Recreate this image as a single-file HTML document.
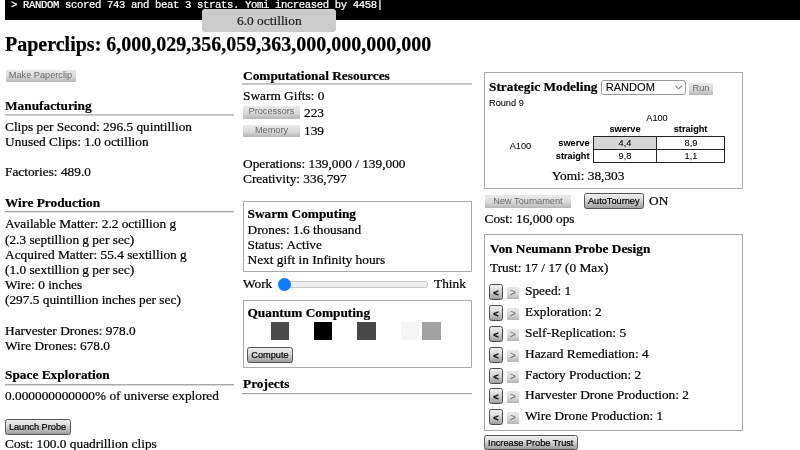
<!DOCTYPE html>
<html><head><meta charset="utf-8"><title>Universal Paperclips</title>
<style>
html,body{margin:0;padding:0;background:#fff;}
body{width:800px;height:450px;overflow:hidden;position:relative;font-family:"Liberation Serif",serif;font-size:13.33px;color:#000;}
#w{position:absolute;left:0;top:0;width:800px;height:450px;will-change:transform;}
.t{position:absolute;white-space:nowrap;line-height:0;height:20px;-webkit-text-stroke:0.22px currentColor;}
.t::before{content:"";display:inline-block;height:20px;width:0;}
.b{font-weight:bold;}
.s{font-family:"Liberation Sans",sans-serif;-webkit-text-stroke:0.08px currentColor;}
.m{font-family:"Liberation Mono",monospace;}
.r{position:absolute;}
.box{position:absolute;border:1px solid #a9a9a9;box-sizing:border-box;}
.btn{position:absolute;background-origin:border-box;font-family:"Liberation Sans",sans-serif;box-sizing:border-box;border:1.3px solid #555;border-radius:2.5px;-webkit-text-stroke:0.2px #000;background:linear-gradient(#efefef,#dadada 40%,#9e9e9e);color:#000;text-align:center;white-space:nowrap;overflow:hidden;}
.dis{border:1px solid transparent;-webkit-text-stroke:0;background:linear-gradient(#eaeaea,#d9d9d9 55%,#b6b6b6);background-origin:border-box;color:#686868;border-radius:1px;}
</style></head><body><div id="w">
<div class="r" style="left:5px;top:0px;width:795px;height:20px;background:#000;"></div>
<div class="t m" style="top:-12px;font-size:10.6px;left:11px;color:#fff;letter-spacing:-0.36px;">&gt; RANDOM scored 743 and beat 3 strats. Yomi increased by 4458|</div>
<div class="r" style="left:202px;top:9px;width:133.5px;height:22.5px;background:#cbcbcb;border-radius:3px;"></div>
<div class="t" style="top:5px;font-size:13.4px;left:237px;color:#222;">6.0 octillion</div>
<div class="t b" style="top:31px;font-size:20px;left:5px;">Paperclips: 6,000,029,356,059,363,000,000,000,000</div>
<div class="btn dis" style="left:5.5px;top:70px;width:70.0px;height:12px;font-size:9.2px;line-height:9px;">Make Paperclip</div>
<div class="t b" style="top:90px;font-size:13.33px;left:5px;">Manufacturing</div>
<div class="r" style="left:5px;top:114px;width:229px;height:1px;background:#c0c0c0;"></div>
<div class="r" style="left:5px;top:115px;width:229px;height:1px;background:#cdcdcd;"></div>
<div class="t" style="top:111px;font-size:13.33px;left:5px;">Clips per Second: 296.5 quintillion</div>
<div class="t" style="top:126px;font-size:13.33px;left:5px;">Unused Clips: 1.0 octillion</div>
<div class="t" style="top:156px;font-size:13.33px;left:5px;">Factories: 489.0</div>
<div class="t b" style="top:187px;font-size:13.33px;left:5px;">Wire Production</div>
<div class="r" style="left:5px;top:211px;width:229px;height:1px;background:#a2a2a2;"></div>
<div class="r" style="left:5px;top:212px;width:229px;height:1px;background:#e4e4e4;"></div>
<div class="t" style="top:208px;font-size:13.33px;left:5px;">Available Matter: 2.2 octillion g</div>
<div class="t" style="top:224px;font-size:13.33px;left:5px;">(2.3 septillion g per sec)</div>
<div class="t" style="top:239px;font-size:13.33px;left:5px;">Acquired Matter: 55.4 sextillion g</div>
<div class="t" style="top:254px;font-size:13.33px;left:5px;">(1.0 sextillion g per sec)</div>
<div class="t" style="top:269px;font-size:13.33px;left:5px;">Wire: 0 inches</div>
<div class="t" style="top:284px;font-size:13.33px;left:5px;">(297.5 quintillion inches per sec)</div>
<div class="t" style="top:315px;font-size:13.33px;left:5px;">Harvester Drones: 978.0</div>
<div class="t" style="top:330px;font-size:13.33px;left:5px;">Wire Drones: 678.0</div>
<div class="t b" style="top:359px;font-size:13.33px;left:5px;">Space Exploration</div>
<div class="r" style="left:5px;top:384px;width:229px;height:1px;background:#aaaaaa;"></div>
<div class="r" style="left:5px;top:385px;width:229px;height:1px;background:#d6d6d6;"></div>
<div class="t" style="top:380px;font-size:13.33px;left:5px;">0.000000000000% of universe explored</div>
<div class="btn" style="left:4.5px;top:419px;width:66.0px;height:15.5px;font-size:9.2px;line-height:14.5px;">Launch Probe</div>
<div class="t" style="top:428px;font-size:13.33px;left:5px;">Cost: 100.0 quadrillion clips</div>
<div class="t b" style="top:60px;font-size:13.33px;left:243px;">Computational Resources</div>
<div class="r" style="left:242px;top:83px;width:230px;height:1px;background:#c0c0c0;"></div>
<div class="r" style="left:242px;top:84px;width:230px;height:1px;background:#c8c8c8;"></div>
<div class="t" style="top:80px;font-size:13.33px;left:243px;">Swarm Gifts: 0</div>
<div class="btn dis" style="left:243px;top:106px;width:57px;height:12.5px;font-size:9.2px;line-height:9.5px;">Processors</div>
<div class="t" style="top:97px;font-size:13.33px;left:304px;">223</div>
<div class="btn dis" style="left:243px;top:125px;width:57px;height:12px;font-size:9.2px;line-height:9px;">Memory</div>
<div class="t" style="top:115px;font-size:13.33px;left:304px;">139</div>
<div class="t" style="top:148px;font-size:13.33px;left:243px;">Operations: 139,000 / 139,000</div>
<div class="t" style="top:163px;font-size:13.33px;left:243px;">Creativity: 336,797</div>
<div class="box" style="left:242.5px;top:201px;width:229.5px;height:71px;"></div>
<div class="t b" style="top:198px;font-size:13.33px;left:247.5px;">Swarm Computing</div>
<div class="t" style="top:214px;font-size:13.33px;left:247.5px;">Drones: 1.6 thousand</div>
<div class="t" style="top:229px;font-size:13.33px;left:247.5px;">Status: Active</div>
<div class="t" style="top:244px;font-size:13.33px;left:247.5px;">Next gift in Infinity hours</div>
<div class="t" style="top:268px;font-size:13.33px;left:243px;">Work</div>
<div class="r" style="left:280px;top:281px;width:147.5px;height:7px;background:#efefef;border:1px solid #c8c8c8;border-radius:3px;box-sizing:border-box;"></div>
<div class="r" style="left:278.1px;top:277.7px;width:13.3px;height:13.3px;background:#0a7aff;border-radius:50%;"></div>
<div class="t" style="top:268px;font-size:13.33px;left:434px;">Think</div>
<div class="box" style="left:242.5px;top:300px;width:229.5px;height:68px;"></div>
<div class="t b" style="top:297px;font-size:13.33px;left:247.5px;">Quantum Computing</div>
<div class="r" style="left:270.6px;top:322px;width:18.3px;height:18px;background:#4b4b4b;"></div>
<div class="r" style="left:313.9px;top:322px;width:18.3px;height:18px;background:#000;"></div>
<div class="r" style="left:357.3px;top:322px;width:18.3px;height:18px;background:#484848;"></div>
<div class="r" style="left:400.8px;top:322px;width:18.3px;height:18px;background:#f6f6f6;"></div>
<div class="r" style="left:422.4px;top:322px;width:18.3px;height:18px;background:#a3a3a3;"></div>
<div class="btn" style="left:247px;top:346.5px;width:46px;height:16.0px;font-size:9.2px;line-height:15.0px;">Compute</div>
<div class="t b" style="top:368px;font-size:13.33px;left:243px;">Projects</div>
<div class="r" style="left:242px;top:393px;width:230px;height:1px;background:#ababab;"></div>
<div class="r" style="left:242px;top:394px;width:230px;height:1px;background:#ececec;"></div>
<div class="box" style="left:484px;top:72px;width:259px;height:117px;"></div>
<div class="t b" style="top:71px;font-size:13.33px;left:489px;">Strategic Modeling</div>
<div class="r" style="left:601px;top:80px;width:84.5px;height:15px;border:1px solid #999;border-radius:3px;box-sizing:border-box;background:#fff;"></div>
<div class="t s" style="top:71px;font-size:11.1px;left:605.7px;">RANDOM</div>
<svg class="r" style="left:674px;top:84px" width="10" height="6" viewBox="0 0 10 6"><path d="M1.2 1.9 L4.6 4.7 L8 1.9" fill="none" stroke="#333" stroke-width="0.9"/></svg>
<div class="btn dis" style="left:689px;top:82.5px;width:24px;height:12.5px;font-size:9.2px;line-height:9.5px;">Run</div>
<div class="t s" style="top:86px;font-size:9.2px;left:489px;">Round 9</div>
<div class="t s" style="top:101px;font-size:9.2px;left:557px;width:200px;text-align:center;">A100</div>
<div class="t b s" style="top:112px;font-size:9.2px;left:525px;width:200px;text-align:center;">swerve</div>
<div class="t b s" style="top:112px;font-size:9.2px;left:590.6px;width:200px;text-align:center;">straight</div>
<div class="t s" style="top:129px;font-size:9.2px;left:420.4px;width:200px;text-align:center;">A100</div>
<div class="t b s" style="top:126px;font-size:9.2px;right:210.5px;">swerve</div>
<div class="t b s" style="top:139px;font-size:9.2px;right:210.5px;">straight</div>
<div class="r" style="left:593px;top:136px;width:132px;height:27px;background:#262626;"></div>
<div class="r" style="left:594px;top:137px;width:62px;height:12px;background:#d6d6d6;"></div>
<div class="r" style="left:657px;top:137px;width:67px;height:12px;background:#fff;"></div>
<div class="r" style="left:594px;top:150px;width:62px;height:12px;background:#fff;"></div>
<div class="r" style="left:657px;top:150px;width:67px;height:12px;background:#fff;"></div>
<div class="t s" style="top:126px;font-size:9.2px;left:525px;width:200px;text-align:center;">4,4</div>
<div class="t s" style="top:126px;font-size:9.2px;left:591px;width:200px;text-align:center;">8,9</div>
<div class="t s" style="top:139px;font-size:9.2px;left:525px;width:200px;text-align:center;">9,8</div>
<div class="t s" style="top:139px;font-size:9.2px;left:591px;width:200px;text-align:center;">1,1</div>
<div class="t" style="top:160px;font-size:13.33px;left:551.7px;">Yomi: 38,303</div>
<div class="btn dis" style="left:485px;top:195px;width:86px;height:12.5px;font-size:9.2px;line-height:9.5px;line-height:10px;">New Tournament</div>
<div class="btn" style="left:583.5px;top:193px;width:60.5px;height:15.5px;font-size:9.2px;line-height:14.5px;">AutoTourney</div>
<div class="t" style="top:185px;font-size:13.33px;left:649px;">ON</div>
<div class="t" style="top:203px;font-size:13.33px;left:484.5px;">Cost: 16,000 ops</div>
<div class="box" style="left:484px;top:234px;width:259px;height:197px;"></div>
<div class="t b" style="top:233px;font-size:13.33px;left:490px;">Von Neumann Probe Design</div>
<div class="t" style="top:252px;font-size:13.33px;left:490px;">Trust: 17 / 17 (0 Max)</div>
<div class="t" style="top:275px;font-size:13.33px;left:525px;">Speed: 1</div>
<div class="btn" style="left:489px;top:284px;width:14px;height:16px;font-size:9.2px;line-height:15px;font-weight:bold;border:1.5px solid #4c4c4c;line-height:16px;">&lt;</div>
<div class="btn dis" style="left:507px;top:287px;width:12px;height:12px;font-size:10px;line-height:9px;line-height:9.5px;">&gt;</div>
<div class="t" style="top:296px;font-size:13.33px;left:525px;">Exploration: 2</div>
<div class="btn" style="left:489px;top:305px;width:14px;height:16px;font-size:9.2px;line-height:15px;font-weight:bold;border:1.5px solid #4c4c4c;line-height:16px;">&lt;</div>
<div class="btn dis" style="left:507px;top:308px;width:12px;height:12px;font-size:10px;line-height:9px;line-height:9.5px;">&gt;</div>
<div class="t" style="top:317px;font-size:13.33px;left:525px;">Self-Replication: 5</div>
<div class="btn" style="left:489px;top:326px;width:14px;height:16px;font-size:9.2px;line-height:15px;font-weight:bold;border:1.5px solid #4c4c4c;line-height:16px;">&lt;</div>
<div class="btn dis" style="left:507px;top:329px;width:12px;height:12px;font-size:10px;line-height:9px;line-height:9.5px;">&gt;</div>
<div class="t" style="top:338px;font-size:13.33px;left:525px;">Hazard Remediation: 4</div>
<div class="btn" style="left:489px;top:347px;width:14px;height:16px;font-size:9.2px;line-height:15px;font-weight:bold;border:1.5px solid #4c4c4c;line-height:16px;">&lt;</div>
<div class="btn dis" style="left:507px;top:350px;width:12px;height:12px;font-size:10px;line-height:9px;line-height:9.5px;">&gt;</div>
<div class="t" style="top:359px;font-size:13.33px;left:525px;">Factory Production: 2</div>
<div class="btn" style="left:489px;top:368px;width:14px;height:16px;font-size:9.2px;line-height:15px;font-weight:bold;border:1.5px solid #4c4c4c;line-height:16px;">&lt;</div>
<div class="btn dis" style="left:507px;top:371px;width:12px;height:12px;font-size:10px;line-height:9px;line-height:9.5px;">&gt;</div>
<div class="t" style="top:379px;font-size:13.33px;left:525px;">Harvester Drone Production: 2</div>
<div class="btn" style="left:489px;top:388px;width:14px;height:16px;font-size:9.2px;line-height:15px;font-weight:bold;border:1.5px solid #4c4c4c;line-height:16px;">&lt;</div>
<div class="btn dis" style="left:507px;top:391px;width:12px;height:12px;font-size:10px;line-height:9px;line-height:9.5px;">&gt;</div>
<div class="t" style="top:400px;font-size:13.33px;left:525px;">Wire Drone Production: 1</div>
<div class="btn" style="left:489px;top:409px;width:14px;height:16px;font-size:9.2px;line-height:15px;font-weight:bold;border:1.5px solid #4c4c4c;line-height:16px;">&lt;</div>
<div class="btn dis" style="left:507px;top:412px;width:12px;height:12px;font-size:10px;line-height:9px;line-height:9.5px;">&gt;</div>
<div class="btn" style="left:483.5px;top:435px;width:94.5px;height:15px;font-size:9.2px;line-height:14px;">Increase Probe Trust</div>
</div></body></html>
